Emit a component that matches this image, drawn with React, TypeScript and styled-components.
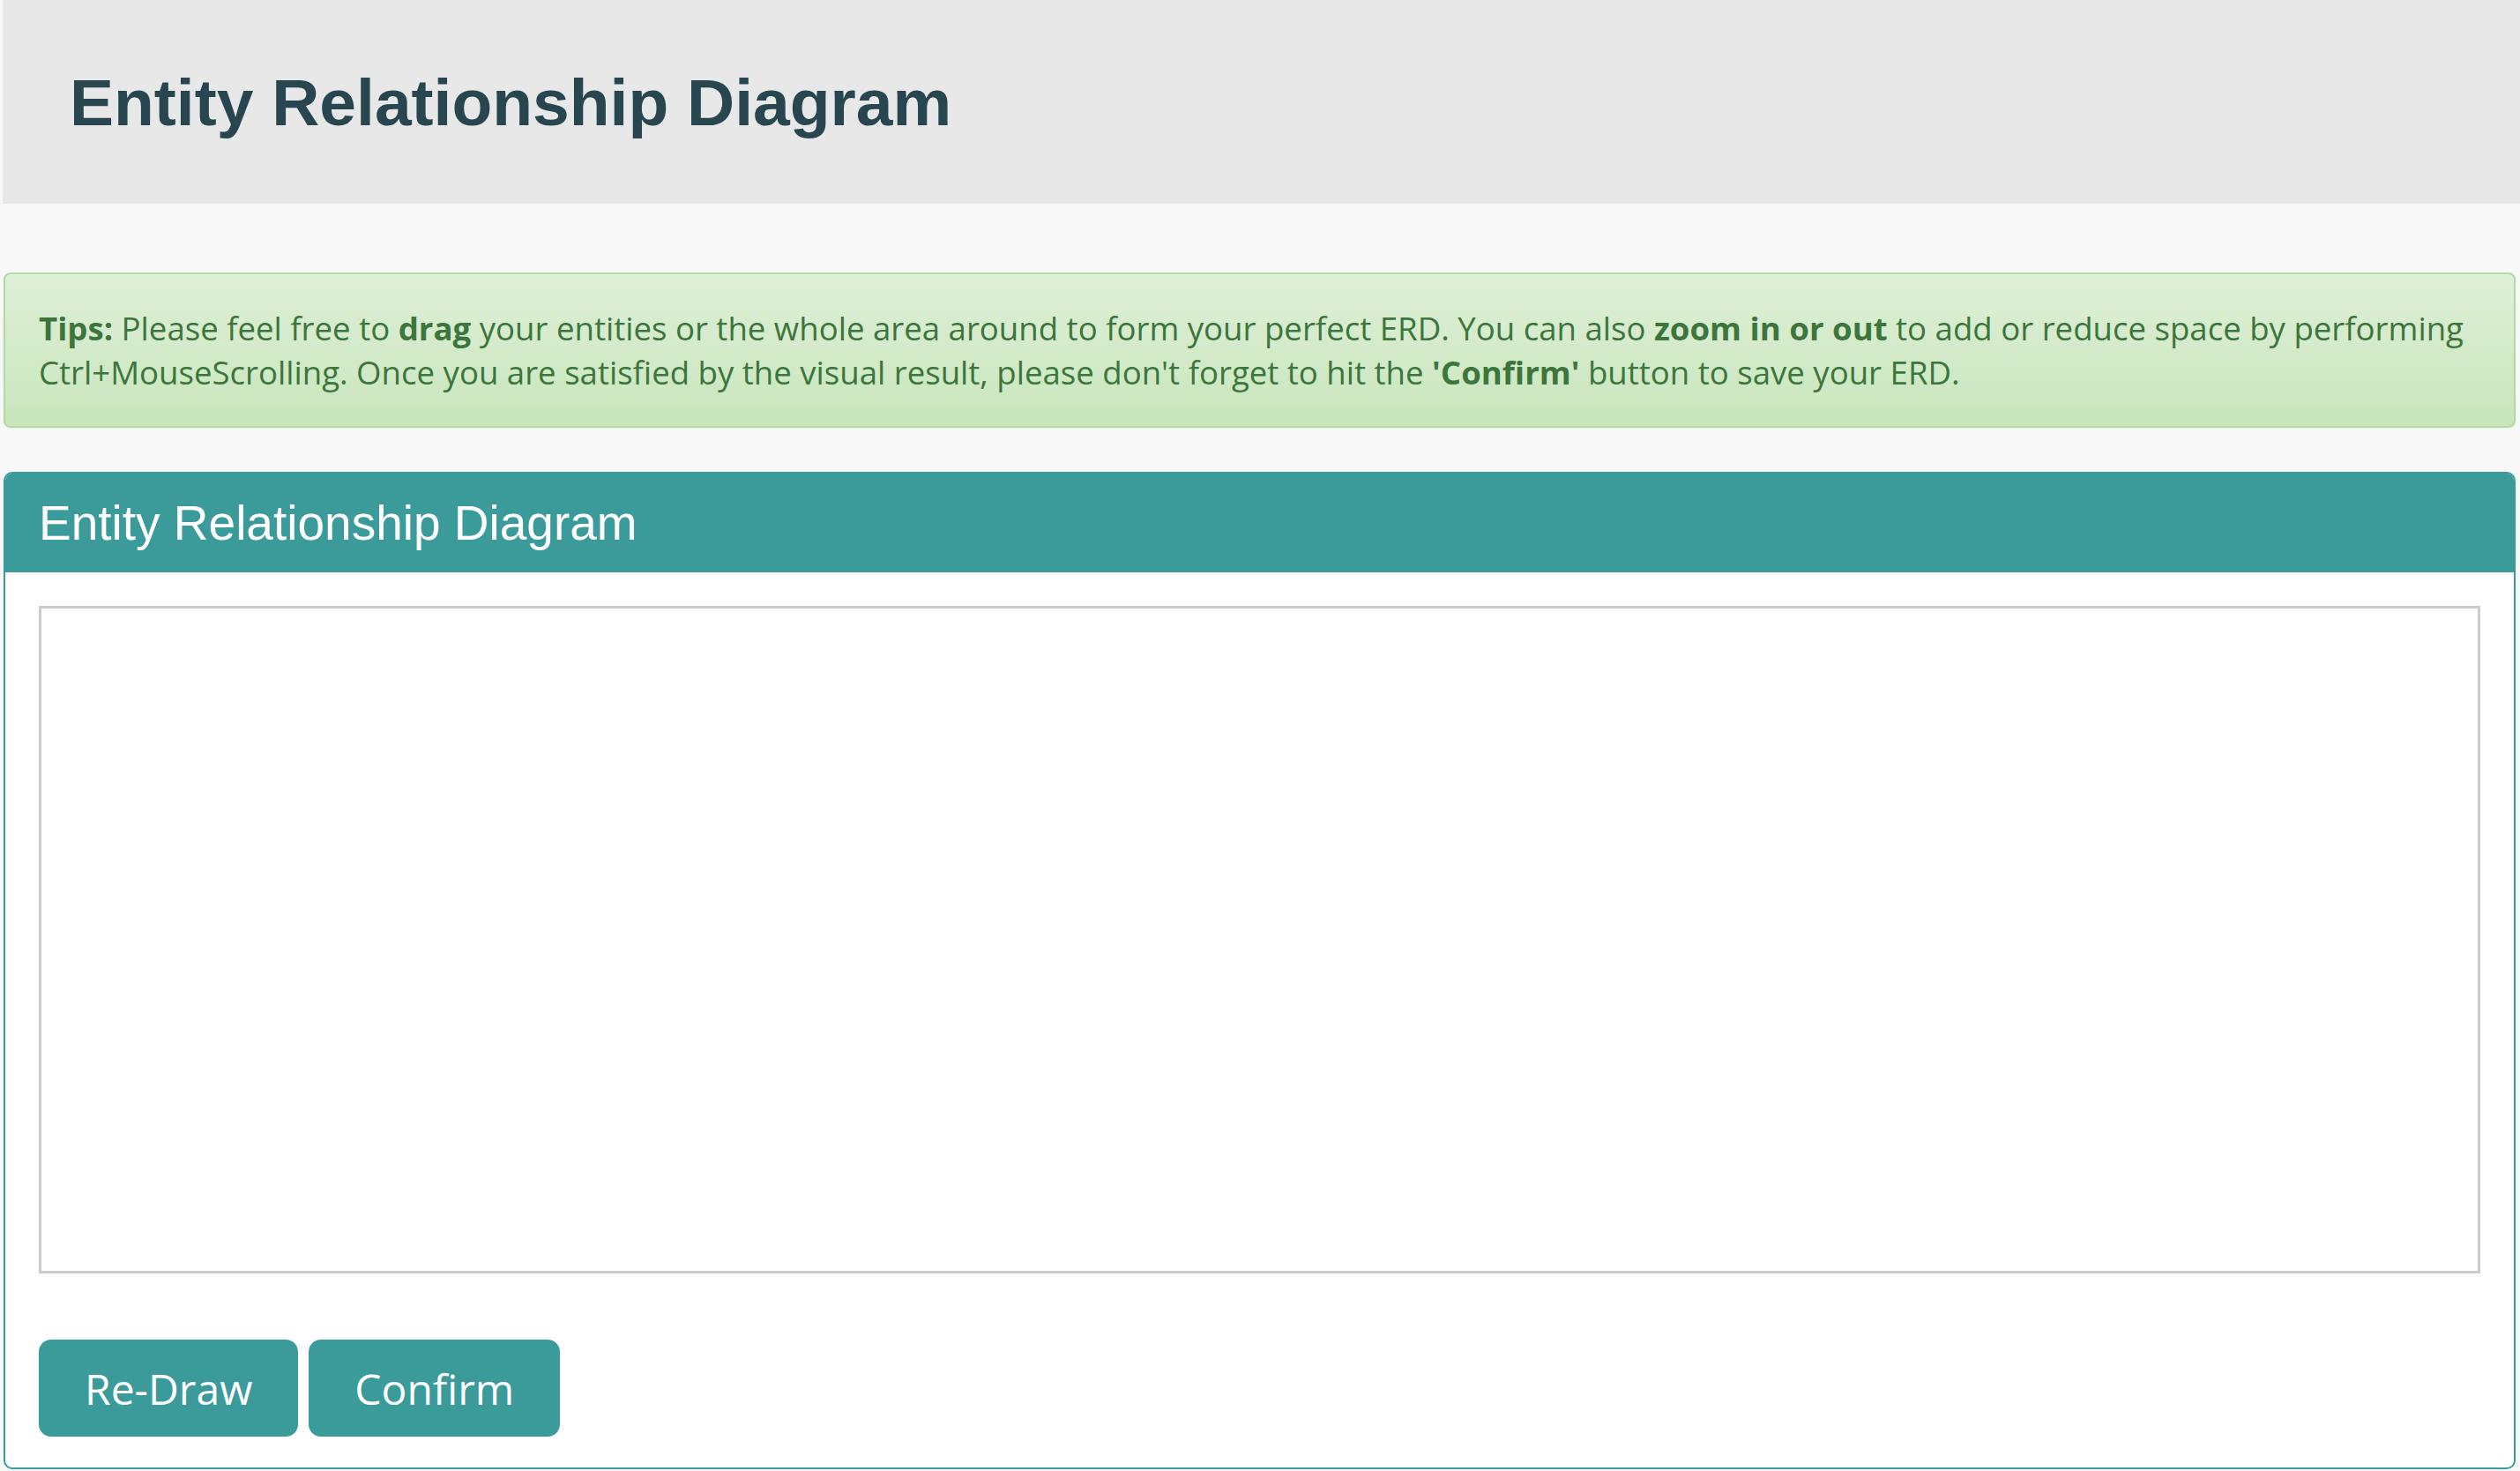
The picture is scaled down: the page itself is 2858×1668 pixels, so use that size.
import styled, { createGlobalStyle } from "styled-components";

const GlobalStyle = createGlobalStyle`
  html, body {
    margin: 0;
    padding: 0;
    background: #f8f8f8;
  }
  * {
    box-sizing: border-box;
  }
`;

const TEAL = "#3b9a9a";

const Header = styled.header`
  margin-left: 3px;
  height: 231px;
  display: flex;
  align-items: center;
  padding-left: 76px;
  background: #e8e8e8;
`;

const PageTitle = styled.h1`
  margin: 0;
  font-family: "Liberation Sans", Arial, sans-serif;
  font-size: 75px;
  font-weight: 700;
  color: #274650;
`;

const Content = styled.main`
  padding: 78px 5px 0 4px;
`;

const Tips = styled.div`
  margin-bottom: 50px;
  padding: 36px 38px;
  border: 2.5px solid #b2dba1;
  border-radius: 8px;
  background: linear-gradient(to bottom, #dff0d8 0, #c8e5bc 100%);
  box-shadow: inset 0 1px 0 rgba(255, 255, 255, 0.25),
    0 1px 2px rgba(0, 0, 0, 0.05);
  font-family: "Open Sans", Lato, sans-serif;
  font-size: 36.6px;
  line-height: 50px;
  color: #3c763d;

  b {
    font-weight: 700;
  }
`;

const Panel = styled.section`
  border: 2.5px solid ${TEAL};
  border-radius: 10px;
  background: #fff;
  overflow: hidden;
`;

const PanelHeading = styled.div`
  height: 112px;
  display: flex;
  align-items: center;
  padding: 0 38px;
  background: ${TEAL};
`;

const PanelTitle = styled.h3`
  margin: 0;
  font-family: "Liberation Sans", Arial, sans-serif;
  font-size: 55px;
  font-weight: 400;
  color: #fff;
`;

const PanelBody = styled.div`
  padding: 38px 38px 35px;
`;

const Canvas = styled.div`
  height: 757px;
  border: 3px solid #cccccc;
  background: #fff;
`;

const ButtonRow = styled.div`
  display: flex;
  gap: 12px;
  margin-top: 75px;
`;

const Button = styled.button`
  height: 110px;
  padding: 0 52px;
  border: none;
  border-radius: 14px;
  background: ${TEAL};
  color: #fff;
  font-family: "Open Sans", Lato, sans-serif;
  font-size: 48px;
  cursor: pointer;
`;

export default function App() {
  return (
    <>
      <GlobalStyle />
      <Header>
        <PageTitle>Entity Relationship Diagram</PageTitle>
      </Header>
      <Content>
        <Tips>
          <b>Tips:</b> Please feel free to <b>drag</b> your entities or the
          whole area around to form your perfect ERD. You can also{" "}
          <b>zoom in or out</b> to add or reduce space by performing
          Ctrl+MouseScrolling. Once you are satisfied by the visual result,
          please don't forget to hit the <b>'Confirm'</b> button to save your
          ERD.
        </Tips>
        <Panel>
          <PanelHeading>
            <PanelTitle>Entity Relationship Diagram</PanelTitle>
          </PanelHeading>
          <PanelBody>
            <Canvas />
            <ButtonRow>
              <Button>Re-Draw</Button>
              <Button>Confirm</Button>
            </ButtonRow>
          </PanelBody>
        </Panel>
      </Content>
    </>
  );
}
